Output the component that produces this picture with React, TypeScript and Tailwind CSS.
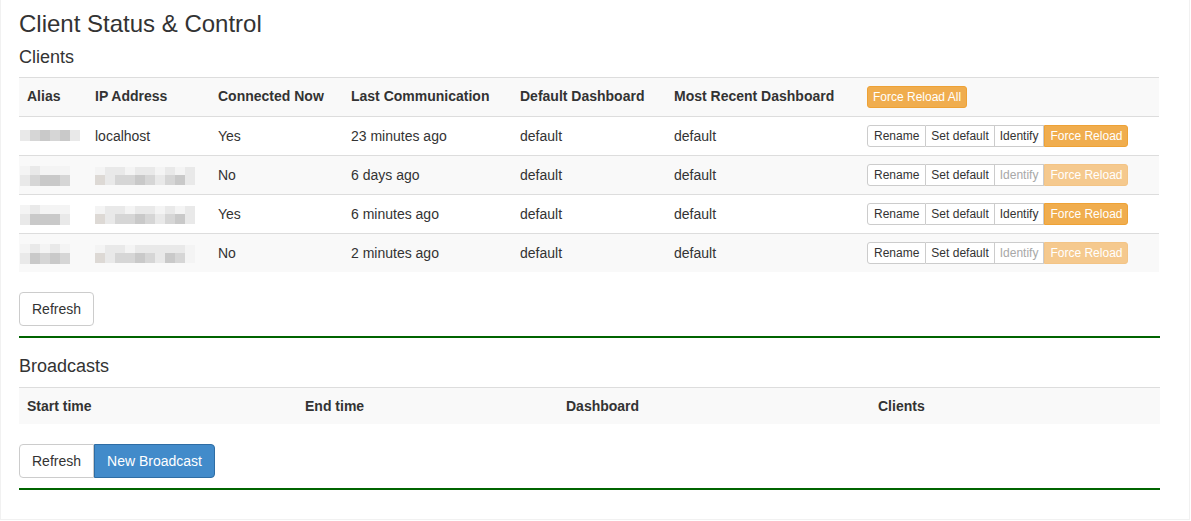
import React from "react";

const font = { fontFamily: '"Liberation Sans", Arial, Helvetica, sans-serif' };

type PixProps = { rows: string[][]; w?: number; h?: number[]; className?: string };
function Pix({ rows, w = 10, h = [8, 10], className = "" }: PixProps) {
  return (
    <div className={"flex flex-col " + className}>
      {rows.map((r, i) => (
        <div key={i} className="flex">
          {r.map((c, j) => (
            <div key={j} style={{ width: w, height: h[i] ?? 10, background: c }} />
          ))}
        </div>
      ))}
    </div>
  );
}

const cols = ["w-[68px]", "w-[123px]", "w-[133px]", "w-[169px]", "w-[154px]", "w-[193px]", "w-[300px]"];

function BtnGroup({ active }: { active: boolean }) {
  const base = "h-[22px] text-[12px] leading-[18px] border";
  return (
    <div className="flex">
      <button className={base + " px-[6px] border-[#ccc] bg-white text-[#333] rounded-l-[3px]"}>Rename</button>
      <button className={base + " px-[5px] border-[#ccc] border-l-0 bg-white text-[#333]"}>Set default</button>
      <button className={base + " px-[5px] border-[#ccc] border-l-0 bg-white " + (active ? "text-[#333]" : "text-[#a8a8a8]")}>Identify</button>
      <button
        className={
          base +
          " px-[5px] rounded-r-[3px] text-white " +
          (active ? "bg-[#f0ad4e] border-[#eea236]" : "bg-[#f5c98e] border-[#f3c486]")
        }
      >
        Force Reload
      </button>
    </div>
  );
}

const L = "#e9e9e9";
const M = "#d6d6d6";
const D = "#c9c9c9";
const P = "#f4f4f4";

const aliasPix: string[][][] = [
  [[L, M, D, M, D, L]],
  [
    [P, L, P, P, P],
    [L, M, D, D, M],
  ],
  [
    [P, L, P, P, P],
    [L, D, D, D, L],
  ],
  [
    [P, L, P, L, P],
    [L, D, M, D, M],
  ],
];

const ipPix: (string[][] | null)[] = [
  null,
  [
    [P, L, L, P, L, L, P, L, P, L],
    ["#ddd9d5", L, M, M, D, M, L, M, D, L],
  ],
  [
    [P, L, L, P, L, L, P, L, P, L],
    ["#ddd9d5", L, M, M, D, M, L, M, D, L],
  ],
  [
    [P, L, L, P, L, L, L, L, L, P],
    ["#ddd9d5", L, M, M, D, M, L, D, M, P],
  ],
];

const rows = [
  { ip: "localhost", conn: "Yes", last: "23 minutes ago", active: true },
  { ip: "", conn: "No", last: "6 days ago", active: false },
  { ip: "", conn: "Yes", last: "6 minutes ago", active: true },
  { ip: "", conn: "No", last: "2 minutes ago", active: false },
];

export default function App() {
  return (
    <div style={font} className="w-[1191px] h-[521px] bg-white text-[#333] text-[14px]">
      <div className="w-[1190px] h-[520px] border-x border-b border-[#f1f1f1]">
        <div className="pl-[18px] w-[1159px]">
          <h3 className="pt-[11px] text-[24px] leading-[26.4px] font-normal">Client Status &amp; Control</h3>
          <h4 className="mt-[11px] text-[18px] leading-[19.8px] font-normal">Clients</h4>

          <div className="mt-[9px] w-[1140px]">
            <div className="flex bg-[#f9f9f9] border-t border-[#ddd] font-bold">
              {["Alias", "IP Address", "Connected Now", "Last Communication", "Default Dashboard", "Most Recent Dashboard"].map(
                (t, i) => (
                  <div key={t} className={cols[i] + " px-2 pt-[7px] pb-[9px] leading-[22px]"}>
                    {t}
                  </div>
                )
              )}
              <div className={cols[6] + " px-2 py-2"}>
                <button className="h-[22px] px-[5px] text-[12px] leading-[18px] font-normal text-white bg-[#f0ad4e] border border-[#eea236] rounded-[3px]">
                  Force Reload All
                </button>
              </div>
            </div>
            {rows.map((r, i) => (
              <div key={i} className={"flex border-t border-[#ddd] " + (i % 2 === 1 ? "bg-[#f9f9f9]" : "bg-white")}>
                <div className={cols[0] + " py-2 leading-[22px] h-[38px]"}>
                  <Pix
                    rows={aliasPix[i]}
                    className={i === 0 ? "ml-[1px] mt-[5px]" : "ml-[1px] mt-[2px]"}
                    h={i === 0 ? [11] : [9, 11]}
                  />
                </div>
                <div className={cols[1] + " px-2 py-2 leading-[22px]"}>
                  {ipPix[i] ? <Pix rows={ipPix[i]!} h={[8, 10]} className="mt-[3px]" /> : r.ip}
                </div>
                <div className={cols[2] + " px-2 py-2 leading-[22px]"}>{r.conn}</div>
                <div className={cols[3] + " px-2 py-2 leading-[22px]"}>{r.last}</div>
                <div className={cols[4] + " px-2 py-2 leading-[22px]"}>default</div>
                <div className={cols[5] + " px-2 py-2 leading-[22px]"}>default</div>
                <div className={cols[6] + " px-2 py-2"}>
                  <BtnGroup active={r.active} />
                </div>
              </div>
            ))}
          </div>

          <button className="mt-[20px] h-[34px] px-3 border border-[#ccc] rounded-[4px] bg-white text-[14px] leading-5 text-[#333]">
            Refresh
          </button>
          <div className="mt-[10px] h-[2px] w-[1141px] bg-[#006400]" />

          <h4 className="mt-[19px] text-[18px] leading-[19.8px] font-normal">Broadcasts</h4>
          <div className="mt-[10px] w-[1141px] flex bg-[#f9f9f9] border-t border-[#ddd] font-bold">
            <div className="w-[278px] px-2 py-2 leading-5">Start time</div>
            <div className="w-[261px] px-2 py-2 leading-5">End time</div>
            <div className="w-[312px] px-2 py-2 leading-5">Dashboard</div>
            <div className="w-[290px] px-2 py-2 leading-5">Clients</div>
          </div>

          <div className="mt-[20px] flex">
            <button className="h-[34px] px-3 border border-[#ccc] rounded-l-[4px] bg-white text-[14px] leading-5 text-[#333]">
              Refresh
            </button>
            <button className="h-[34px] px-3 border border-[#2e6da4] rounded-r-[4px] bg-[#428bca] text-[14px] leading-5 text-white">
              New Broadcast
            </button>
          </div>
          <div className="mt-[10px] h-[2px] w-[1141px] bg-[#006400]" />
        </div>
      </div>
    </div>
  );
}
